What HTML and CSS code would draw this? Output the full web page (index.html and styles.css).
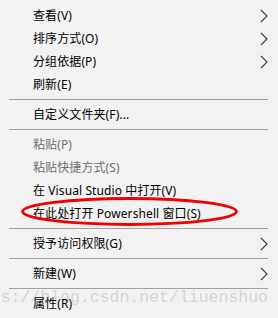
FILE: index.html
```html
<!DOCTYPE html>
<html>
<head>
<meta charset="utf-8">
<link rel="stylesheet" href="styles.css">
</head>
<body>
<div class="menu">
  <div class="item"><span class="label">查看(V)</span><svg class="arrow" width="8" height="14" viewBox="0 0 8 14"><polyline points="1,1 7,7 1,13" /></svg></div>
  <div class="item"><span class="label">排序方式(O)</span><svg class="arrow" width="8" height="14" viewBox="0 0 8 14"><polyline points="1,1 7,7 1,13" /></svg></div>
  <div class="item"><span class="label">分组依据(P)</span><svg class="arrow" width="8" height="14" viewBox="0 0 8 14"><polyline points="1,1 7,7 1,13" /></svg></div>
  <div class="item"><span class="label">刷新(E)</span></div>
  <div class="sep"></div>
  <div class="item"><span class="label">自定义文件夹(F)...</span></div>
  <div class="sep"></div>
  <div class="item disabled"><span class="label">粘贴(P)</span></div>
  <div class="item disabled"><span class="label">粘贴快捷方式(S)</span></div>
  <div class="item"><span class="label">在 Visual Studio 中打开(V)</span></div>
  <div class="item"><span class="label">在此处打开 Powershell 窗口(S)</span></div>
  <div class="sep"></div>
  <div class="item"><span class="label">授予访问权限(G)</span><svg class="arrow" width="8" height="14" viewBox="0 0 8 14"><polyline points="1,1 7,7 1,13" /></svg></div>
  <div class="sep"></div>
  <div class="item"><span class="label">新建(W)</span><svg class="arrow" width="8" height="14" viewBox="0 0 8 14"><polyline points="1,1 7,7 1,13" /></svg></div>
  <div class="sep"></div>
  <div class="item"><span class="label">属性(R)</span></div>

  <div class="watermark">https://blog.csdn.net/liuenshuo</div>
  <svg class="circle" width="278" height="318" viewBox="0 0 278 318">
    <ellipse cx="129.5" cy="211.5" rx="107" ry="13" />
  </svg>
</div>
</body>
</html>
```

FILE: styles.css
```css
html, body {
  margin: 0;
  padding: 0;
}
body {
  width: 278px;
  height: 318px;
  overflow: hidden;
  background: #f2f2f2;
}
.menu {
  position: relative;
  width: 278px;
  height: 318px;
  box-sizing: border-box;
  padding-top: 4px;
  background: #f2f2f2;
  display: flex;
  flex-direction: column;
  font-family: "Noto Sans", "Noto Sans CJK SC", sans-serif;
  font-size: 12px;
  color: #000;
  overflow: hidden;
}
.item {
  position: relative;
  z-index: 2;
  height: 23px;
  display: flex;
  align-items: center;
  padding-left: 33px;
  padding-right: 10px;
}
.label {
  flex: 1;
  line-height: 23px;
  white-space: nowrap;
  letter-spacing: 0.1px;
}
.disabled {
  color: #6d6d6d;
}
.arrow {
  flex: none;
}
.arrow polyline {
  fill: none;
  stroke: #2f3f55;
  stroke-width: 1.1;
}
.sep {
  height: 7px;
  display: flex;
  align-items: center;
  padding-left: 9px;
  padding-right: 10px;
}
.sep::before {
  content: "";
  display: block;
  flex: 1;
  height: 1px;
  background: #a0a0a0;
}
.watermark {
  position: absolute;
  z-index: 1;
  right: 10px;
  top: 287px;
  font-family: "Liberation Mono", monospace;
  font-size: 16.5px;
  line-height: 22px;
  color: #d2d2d2;
  white-space: nowrap;
}
.circle {
  position: absolute;
  z-index: 3;
  left: 0;
  top: 0;
}
.circle ellipse {
  fill: none;
  stroke: #f00000;
  stroke-width: 2.8;
}
```
